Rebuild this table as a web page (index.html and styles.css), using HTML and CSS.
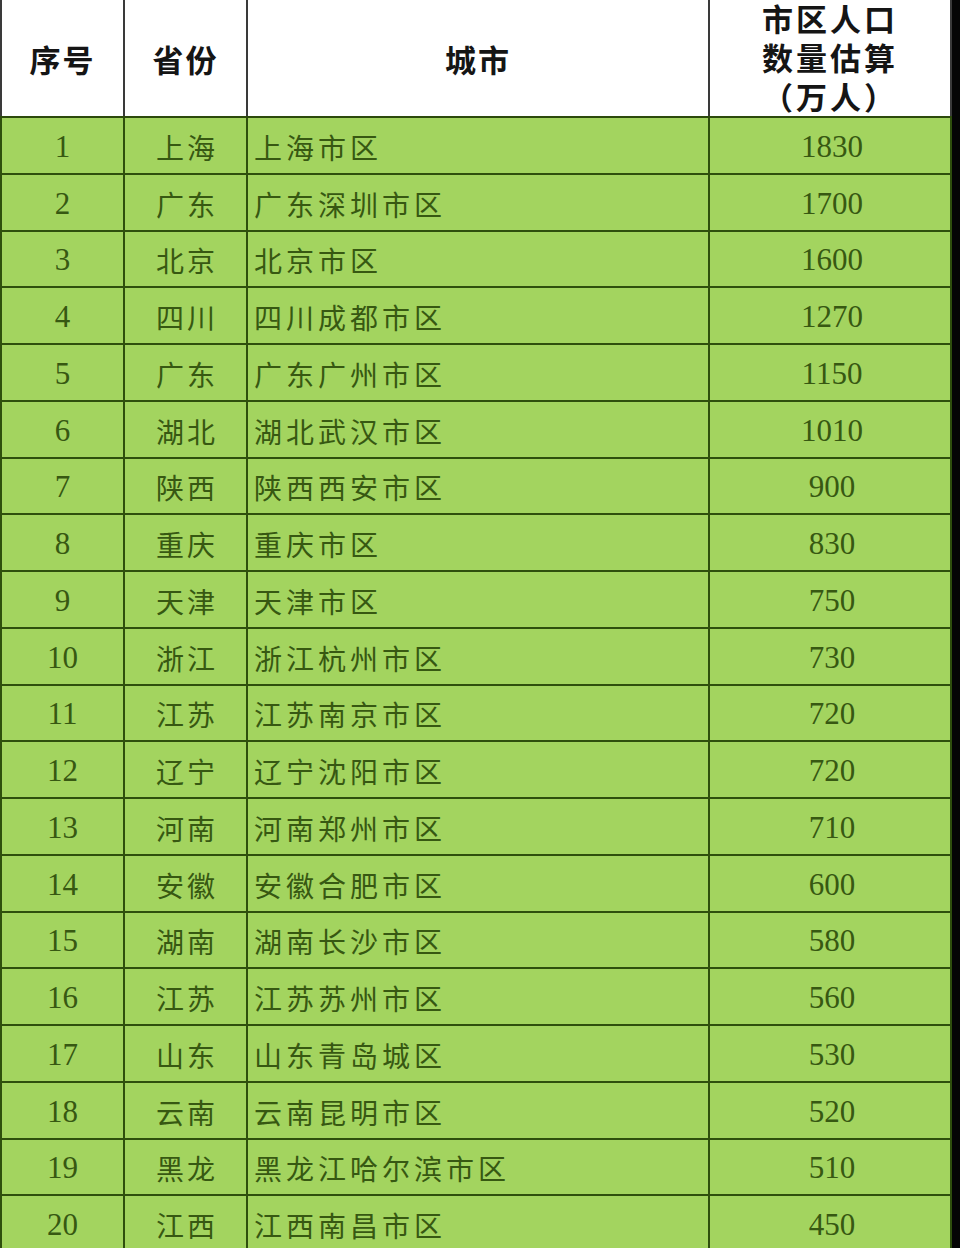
FILE: index.html
```html
<!DOCTYPE html>
<html lang="zh-CN">
<head>
<meta charset="utf-8">
<title>城市市区人口</title>
<link rel="stylesheet" href="styles.css">
</head>
<body>
<table class="pop">
  <colgroup>
    <col class="c-no"><col class="c-prov"><col class="c-city"><col class="c-num">
  </colgroup>
  <thead>
    <tr>
      <th>序号</th>
      <th>省份</th>
      <th>城市</th>
      <th class="h-num"><div class="h-lines"><div>市区人口</div><div>数量估算</div><div>（万人）</div></div></th>
    </tr>
  </thead>
  <tbody>
    <tr><td class="no">1</td><td class="prov">上海</td><td class="city">上海市区</td><td class="num">1830</td></tr>
    <tr><td class="no">2</td><td class="prov">广东</td><td class="city">广东深圳市区</td><td class="num">1700</td></tr>
    <tr><td class="no">3</td><td class="prov">北京</td><td class="city">北京市区</td><td class="num">1600</td></tr>
    <tr><td class="no">4</td><td class="prov">四川</td><td class="city">四川成都市区</td><td class="num">1270</td></tr>
    <tr><td class="no">5</td><td class="prov">广东</td><td class="city">广东广州市区</td><td class="num">1150</td></tr>
    <tr><td class="no">6</td><td class="prov">湖北</td><td class="city">湖北武汉市区</td><td class="num">1010</td></tr>
    <tr><td class="no">7</td><td class="prov">陕西</td><td class="city">陕西西安市区</td><td class="num">900</td></tr>
    <tr><td class="no">8</td><td class="prov">重庆</td><td class="city">重庆市区</td><td class="num">830</td></tr>
    <tr><td class="no">9</td><td class="prov">天津</td><td class="city">天津市区</td><td class="num">750</td></tr>
    <tr><td class="no">10</td><td class="prov">浙江</td><td class="city">浙江杭州市区</td><td class="num">730</td></tr>
    <tr><td class="no">11</td><td class="prov">江苏</td><td class="city">江苏南京市区</td><td class="num">720</td></tr>
    <tr><td class="no">12</td><td class="prov">辽宁</td><td class="city">辽宁沈阳市区</td><td class="num">720</td></tr>
    <tr><td class="no">13</td><td class="prov">河南</td><td class="city">河南郑州市区</td><td class="num">710</td></tr>
    <tr><td class="no">14</td><td class="prov">安徽</td><td class="city">安徽合肥市区</td><td class="num">600</td></tr>
    <tr><td class="no">15</td><td class="prov">湖南</td><td class="city">湖南长沙市区</td><td class="num">580</td></tr>
    <tr><td class="no">16</td><td class="prov">江苏</td><td class="city">江苏苏州市区</td><td class="num">560</td></tr>
    <tr><td class="no">17</td><td class="prov">山东</td><td class="city">山东青岛城区</td><td class="num">530</td></tr>
    <tr><td class="no">18</td><td class="prov">云南</td><td class="city">云南昆明市区</td><td class="num">520</td></tr>
    <tr><td class="no">19</td><td class="prov">黑龙</td><td class="city">黑龙江哈尔滨市区</td><td class="num">510</td></tr>
    <tr><td class="no">20</td><td class="prov">江西</td><td class="city">江西南昌市区</td><td class="num">450</td></tr>
  </tbody>
</table>
</body>
</html>
```

FILE: styles.css
```css
html, body {
  margin: 0;
  padding: 0;
  background: #050505;
  height: 1248px;
  overflow: hidden;
}

.pop {
  width: 950px;
  table-layout: fixed;
  border-collapse: collapse;
  font-family: "Noto Sans CJK SC", "Noto Sans", sans-serif;
}

.c-no { width: 123px; }
.c-prov { width: 123px; }
.c-city { width: 462px; }
.c-num { width: 242px; }

.pop thead tr {
  height: 117px;
}

.pop thead th {
  background: #ffffff;
  color: #151515;
  font-weight: 700;
  font-size: 31px;
  letter-spacing: 2px;
  padding: 0;
  text-align: center;
  vertical-align: middle;
  border-left: 2px solid #3a3a3a;
  border-right: 2px solid #3a3a3a;
  border-bottom: 2px solid #2c4a0c;
  border-top: 0;
}

.pop thead th.h-num {
  vertical-align: top;
  letter-spacing: 3px;
}

.h-lines {
  margin-top: -2px;
  display: flex;
  flex-direction: column;
  align-items: center;
}

.h-lines div {
  height: 39px;
  line-height: 39px;
}

.pop tbody tr {
  height: 56.75px;
}

.pop tbody td {
  background: #a3d45f;
  color: #375812;
  padding: 3px 0 0 0;
  border: 2px solid #2f4f0d;
  font-size: 28px;
  font-weight: 400;
  line-height: 34px;
  vertical-align: middle;
  white-space: nowrap;
}

.pop tbody td.no {
  text-align: center;
  font-family: "Liberation Serif", "Noto Sans CJK SC", serif;
  font-size: 31px;
}

.pop tbody td.prov {
  text-align: center;
  letter-spacing: 3px;
  padding-left: 3px;
}

.pop tbody td.city {
  text-align: left;
  padding-left: 6px;
  letter-spacing: 4px;
}

.pop tbody td.num {
  text-align: center;
  font-family: "Liberation Serif", "Noto Sans CJK SC", serif;
  font-size: 31px;
  letter-spacing: 0;
  padding-left: 4px;
}

.pop tbody tr:first-child td {
  border-top: 2px solid #2c4a0c;
}
```
